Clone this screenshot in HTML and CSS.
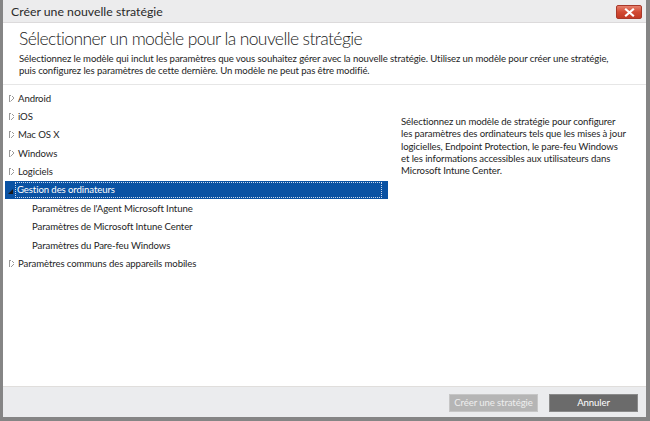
FILE: index.html
```html
<!DOCTYPE html>
<html lang="fr">
<head>
<meta charset="utf-8">
<title>Créer une nouvelle stratégie</title>
<link rel="stylesheet" href="styles.css">
</head>
<body>
<div class="window">
  <div class="titlebar">
    <span class="title">Créer une nouvelle stratégie</span>
    <button class="close" aria-label="Fermer">
      <svg width="11" height="9" viewBox="0 0 11 9"><path d="M2 1.5 L9 7.5 M9 1.5 L2 7.5" stroke="#fff" stroke-width="2.2" stroke-linecap="square"/></svg>
    </button>
  </div>
  <div class="header">
    <h1>Sélectionner un modèle pour la nouvelle stratégie</h1>
    <p>Sélectionnez le modèle qui inclut les paramètres que vous souhaitez gérer avec la nouvelle stratégie. Utilisez un modèle pour créer une stratégie,<br>puis configurez les paramètres de cette dernière. Un modèle ne peut pas être modifié.</p>
  </div>
  <div class="main">
    <ul class="tree">
      <li class="row"><span class="tri closed"></span><span class="label">Android</span></li>
      <li class="row"><span class="tri closed"></span><span class="label">iOS</span></li>
      <li class="row"><span class="tri closed"></span><span class="label">Mac OS X</span></li>
      <li class="row"><span class="tri closed"></span><span class="label">Windows</span></li>
      <li class="row"><span class="tri closed"></span><span class="label">Logiciels</span></li>
      <li class="row selected"><span class="tri open"></span><span class="label focus">Gestion des ordinateurs</span></li>
      <li class="row child"><span class="label">Paramètres de l'Agent Microsoft Intune</span></li>
      <li class="row child"><span class="label">Paramètres de Microsoft Intune Center</span></li>
      <li class="row child"><span class="label">Paramètres du Pare-feu Windows</span></li>
      <li class="row"><span class="tri closed"></span><span class="label">Paramètres communs des appareils mobiles</span></li>
    </ul>
    <div class="info">
      <p>Sélectionnez un modèle de stratégie pour configurer<br>les paramètres des ordinateurs tels que les mises à jour<br>logicielles, Endpoint Protection, le pare-feu Windows<br>et les informations accessibles aux utilisateurs dans<br>Microsoft Intune Center.</p>
    </div>
  </div>
  <div class="footer">
    <button class="btn disabled">Créer une stratégie</button>
    <button class="btn cancel">Annuler</button>
  </div>
</div>
</body>
</html>
```

FILE: styles.css
```css
html, body {
  margin: 0;
  padding: 0;
  background: #808080;
}
body {
  font-family: Lato, "Noto Sans", sans-serif;
  color: #1e1e1e;
}
.window {
  width: 650px;
  height: 421px;
  box-sizing: border-box;
  border-left: 3px solid #858585;
  border-right: 4px solid #858585;
  border-bottom: 4px solid #858585;
  background: #fff;
  display: flex;
  flex-direction: column;
  white-space: nowrap;
}
.titlebar {
  height: 22px;
  flex: none;
  background: #ececed;
  border-bottom: 1px solid #dcdadb;
  display: flex;
  align-items: center;
  justify-content: space-between;
  padding-left: 8px;
  padding-right: 4px;
}
.title {
  font-size: 12.3px;
  color: #2a2a2a;
}
.close {
  width: 26px;
  height: 14px;
  padding: 0;
  margin-top: 2px;
  border: 1px solid #a8382a;
  border-radius: 2px;
  background: linear-gradient(#e6806c, #d24a33 50%, #c23a25);
  display: flex;
  align-items: center;
  justify-content: center;
}
.close svg { display: block; }
.header {
  flex: none;
  border-bottom: 1px solid #e6e6e6;
  padding: 5px 0 0 16px;
  box-sizing: border-box;
  height: 62px;
}
.header h1 {
  margin: 0;
  font-size: 17.5px;
  font-weight: 300;
  line-height: 22px;
  letter-spacing: -0.6px;
  color: #222;
}
.header p {
  margin: 3px 0 0 0;
  font-size: 9.6px;
  line-height: 12.3px;
  letter-spacing: -0.1px;
  color: #1e1e1e;
}
.main {
  flex: 1;
  display: flex;
  min-height: 0;
}
.tree {
  list-style: none;
  margin: 0 0 0 2px;
  padding: 4px 0 0 0;
  width: 383px;
  flex: none;
}
.row {
  height: 18.4px;
  display: flex;
  align-items: center;
  font-size: 9.6px;
  letter-spacing: -0.1px;
  color: #1e1e1e;
  box-sizing: border-box;
}
.tri {
  flex: none;
}
.tri.closed {
  width: 4px;
  height: 7px;
  margin-right: 4px;
  margin-left: 4px;
  background:
    linear-gradient(to top right, transparent 48%, #9a9a9a 49%, #9a9a9a 60%, transparent 61%) top / 100% 50% no-repeat,
    linear-gradient(to bottom right, transparent 48%, #9a9a9a 49%, #9a9a9a 60%, transparent 61%) bottom / 100% 50% no-repeat;
  border-left: 1px solid #9a9a9a;
}
.tri.open {
  width: 0;
  height: 0;
  border-left: 5px solid transparent;
  border-bottom: 5px solid #1a1a1a;
  margin-left: 3px;
  margin-right: 2px;
  margin-top: 2px;
}
.selected {
  background: #0a52a3;
  color: #fff;
}
.label.focus {
  flex: 1;
  margin-right: 6px;
  border: 1px dotted #c9d8ec;
  padding-left: 1px;
  line-height: 14px;
}
.child .label {
  padding-left: 27px;
}
.info {
  padding: 31px 0 0 13px;
}
.info p {
  margin: 0;
  font-size: 9.6px;
  line-height: 12.3px;
  letter-spacing: -0.1px;
  color: #1e1e1e;
}
.footer {
  flex: none;
  height: 31px;
  box-sizing: border-box;
  background: #ebecee;
  border-top: 1px solid #e0dedc;
  display: flex;
  align-items: center;
  justify-content: flex-end;
  gap: 11px;
  padding-right: 8px;
  padding-top: 1px;
}
.btn {
  width: 89px;
  height: 18px;
  font-family: Lato, "Noto Sans", sans-serif;
  font-size: 9.6px;
  letter-spacing: -0.1px;
  padding: 0;
  border: 1px solid #c4c4c4;
}
.btn.disabled {
  background: #b5b5b5;
  color: #eeeeee;
  border-color: #c6c6c6;
}
.btn.cancel {
  background: #6b6b6b;
  color: #ffffff;
  border-color: #8a8a8a;
}
```
